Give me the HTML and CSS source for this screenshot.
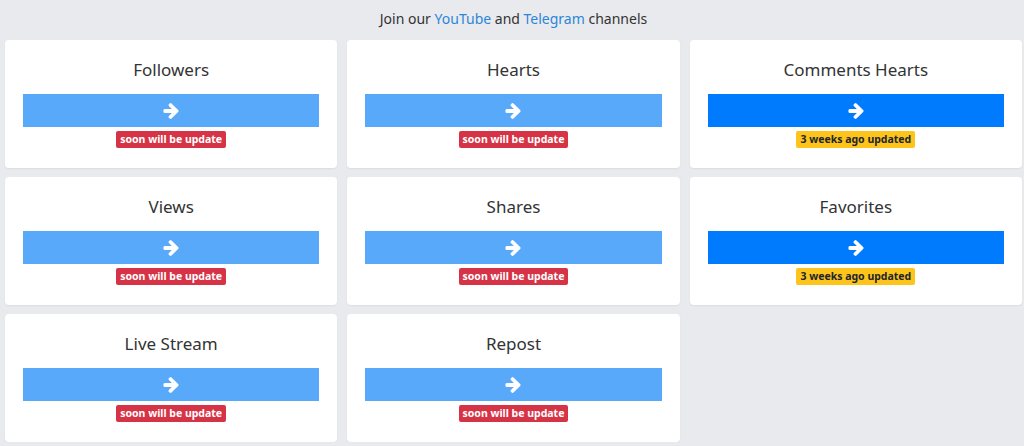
FILE: index.html
```html
<!DOCTYPE html>
<html>
<head>
<meta charset="utf-8">
<link rel="stylesheet" href="styles.css">
</head>
<body>
<div class="top">Join our <a href="#">YouTube</a> and <a href="#">Telegram</a> channels</div>
<div class="grid">
  <div class="card"><div class="title">Followers</div><a class="btn off" href="#"><svg viewBox="0 181 1472 1558" class="arr"><path d="M1472 960q0 54-37 91l-651 651q-39 37-91 37-51 0-90-37l-75-75q-38-38-38-91t38-91l293-293h-704q-52 0-84.5-37.5t-32.5-90.5v-128q0-53 32.5-90.5t84.5-37.5h704l-293-294q-38-36-38-90t38-90l75-75q38-38 90-38 53 0 91 38l651 651q37 35 37 90z"/></svg></a><span class="badge red">soon will be update</span></div>
  <div class="card"><div class="title">Hearts</div><a class="btn off" href="#"><svg viewBox="0 181 1472 1558" class="arr"><path d="M1472 960q0 54-37 91l-651 651q-39 37-91 37-51 0-90-37l-75-75q-38-38-38-91t38-91l293-293h-704q-52 0-84.5-37.5t-32.5-90.5v-128q0-53 32.5-90.5t84.5-37.5h704l-293-294q-38-36-38-90t38-90l75-75q38-38 90-38 53 0 91 38l651 651q37 35 37 90z"/></svg></a><span class="badge red">soon will be update</span></div>
  <div class="card"><div class="title">Comments Hearts</div><a class="btn on" href="#"><svg viewBox="0 181 1472 1558" class="arr"><path d="M1472 960q0 54-37 91l-651 651q-39 37-91 37-51 0-90-37l-75-75q-38-38-38-91t38-91l293-293h-704q-52 0-84.5-37.5t-32.5-90.5v-128q0-53 32.5-90.5t84.5-37.5h704l-293-294q-38-36-38-90t38-90l75-75q38-38 90-38 53 0 91 38l651 651q37 35 37 90z"/></svg></a><span class="badge yel">3 weeks ago updated</span></div>
  <div class="card"><div class="title">Views</div><a class="btn off" href="#"><svg viewBox="0 181 1472 1558" class="arr"><path d="M1472 960q0 54-37 91l-651 651q-39 37-91 37-51 0-90-37l-75-75q-38-38-38-91t38-91l293-293h-704q-52 0-84.5-37.5t-32.5-90.5v-128q0-53 32.5-90.5t84.5-37.5h704l-293-294q-38-36-38-90t38-90l75-75q38-38 90-38 53 0 91 38l651 651q37 35 37 90z"/></svg></a><span class="badge red">soon will be update</span></div>
  <div class="card"><div class="title">Shares</div><a class="btn off" href="#"><svg viewBox="0 181 1472 1558" class="arr"><path d="M1472 960q0 54-37 91l-651 651q-39 37-91 37-51 0-90-37l-75-75q-38-38-38-91t38-91l293-293h-704q-52 0-84.5-37.5t-32.5-90.5v-128q0-53 32.5-90.5t84.5-37.5h704l-293-294q-38-36-38-90t38-90l75-75q38-38 90-38 53 0 91 38l651 651q37 35 37 90z"/></svg></a><span class="badge red">soon will be update</span></div>
  <div class="card"><div class="title">Favorites</div><a class="btn on" href="#"><svg viewBox="0 181 1472 1558" class="arr"><path d="M1472 960q0 54-37 91l-651 651q-39 37-91 37-51 0-90-37l-75-75q-38-38-38-91t38-91l293-293h-704q-52 0-84.5-37.5t-32.5-90.5v-128q0-53 32.5-90.5t84.5-37.5h704l-293-294q-38-36-38-90t38-90l75-75q38-38 90-38 53 0 91 38l651 651q37 35 37 90z"/></svg></a><span class="badge yel">3 weeks ago updated</span></div>
  <div class="card"><div class="title">Live Stream</div><a class="btn off" href="#"><svg viewBox="0 181 1472 1558" class="arr"><path d="M1472 960q0 54-37 91l-651 651q-39 37-91 37-51 0-90-37l-75-75q-38-38-38-91t38-91l293-293h-704q-52 0-84.5-37.5t-32.5-90.5v-128q0-53 32.5-90.5t84.5-37.5h704l-293-294q-38-36-38-90t38-90l75-75q38-38 90-38 53 0 91 38l651 651q37 35 37 90z"/></svg></a><span class="badge red">soon will be update</span></div>
  <div class="card"><div class="title">Repost</div><a class="btn off" href="#"><svg viewBox="0 181 1472 1558" class="arr"><path d="M1472 960q0 54-37 91l-651 651q-39 37-91 37-51 0-90-37l-75-75q-38-38-38-91t38-91l293-293h-704q-52 0-84.5-37.5t-32.5-90.5v-128q0-53 32.5-90.5t84.5-37.5h704l-293-294q-38-36-38-90t38-90l75-75q38-38 90-38 53 0 91 38l651 651q37 35 37 90z"/></svg></a><span class="badge red">soon will be update</span></div>
</div>
</body>
</html>
```

FILE: styles.css
```css
* { box-sizing: border-box; }
html, body { margin: 0; padding: 0; }
body {
  background: #e9eaee;
  font-family: "Noto Sans", "Open Sans", sans-serif;
  color: #333;
  padding: 0 2px 0 5px;
}
.top {
  text-align: center;
  font-size: 14px;
  line-height: 20px;
  padding: 9px 0 11px;
  color: #333;
}
.top a { color: #2b86d8; text-decoration: none; }
.grid {
  display: grid;
  grid-template-columns: repeat(3, 1fr);
  column-gap: 10px;
  row-gap: 9.5px;
}
.card {
  background: #fff;
  border-radius: 4px;
  box-shadow: 0 1px 2px rgba(0,0,0,0.06);
  padding: 18px 18px 19px;
  height: 127.5px;
  display: flex;
  flex-direction: column;
  align-items: center;
}
.title {
  font-size: 17px;
  line-height: 24px;
  color: #333;
  text-align: center;
}
.btn {
  margin-top: 12px;
  align-self: stretch;
  height: 33px;
  display: flex;
  align-items: center;
  justify-content: center;
}
.btn.off { background: #59a9fb; }
.btn.on { background: #007bfe; }
.arr { width: 16px; height: 16px; fill: #fff; display: block; }
.badge {
  margin-top: 4px;
  font-size: 10.5px;
  font-weight: 700;
  line-height: 17px;
  height: 17px;
  padding: 0 4px;
  border-radius: 2px;
}
.badge.red { background: #d63446; color: #fff; }
.badge.yel { background: #fdc41c; color: #212529; }
```
